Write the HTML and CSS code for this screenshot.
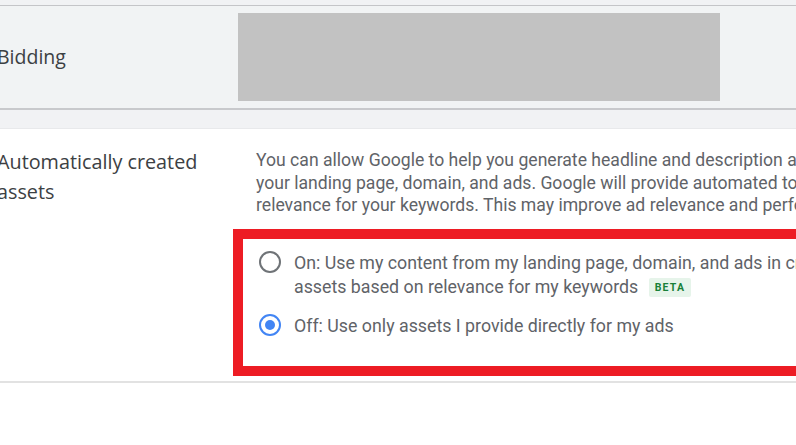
FILE: index.html
```html
<!DOCTYPE html>
<html>
<head>
<meta charset="utf-8">
<link rel="stylesheet" href="styles.css">
</head>
<body>
<div class="page">
  <div class="strip-top"></div>
  <section class="bidding">
    <div class="bid-label">Bidding</div>
    <div class="placeholder"></div>
  </section>
  <div class="strip-mid"></div>
  <section class="assets">
    <div class="assets-label">Automatically created<br>assets</div>
    <div class="assets-body">
      <p class="desc">You can allow Google to help you generate headline and description assets from<br>your landing page, domain, and ads. Google will provide automated tools based on<br>relevance for your keywords. This may improve ad relevance and performance.</p>
      <div class="highlight">
        <label class="option">
          <span class="radio"></span>
          <span class="opt-text">On: Use my content from my landing page, domain, and ads in creating<br>assets based on relevance for my keywords <span class="beta">BETA</span></span>
        </label>
        <label class="option">
          <span class="radio checked"></span>
          <span class="opt-text">Off: Use only assets I provide directly for my ads</span>
        </label>
      </div>
    </div>
  </section>
</div>
</body>
</html>
```
FILE: styles.css
```css
html, body {
  margin: 0;
  padding: 0;
  background: #ffffff;
  overflow: hidden;
  width: 796px;
  height: 445px;
}
.page {
  width: 1200px;
  margin-left: -3px;
  font-family: Roboto, "Liberation Sans", sans-serif;
}
.strip-top {
  height: 5px;
  background: #f1f2f4;
}
.bidding {
  display: flex;
  align-items: flex-start;
  height: 102px;
  background: #f1f3f4;
  border-top: 1px solid #c4c5c8;
  border-bottom: 2px solid #c8c9cc;
  box-sizing: content-box;
}
.bid-label {
  width: 241px;
  padding-top: 37px;
  font-family: "Open Sans", sans-serif;
  font-size: 19.5px;
  color: #3c4043;
}
.placeholder {
  margin-top: 7px;
  width: 482px;
  height: 88px;
  background: #c2c2c2;
}
.strip-mid {
  height: 18px;
  background: #f1f2f4;
  border-bottom: 1px solid #e8e9eb;
}
.assets {
  display: flex;
  align-items: flex-start;
  border-bottom: 2px solid #e2e2e2;
  padding-bottom: 5px;
}
.assets-label {
  width: 259px;
  padding-top: 18px;
  font-family: "Open Sans", sans-serif;
  font-size: 19.8px;
  line-height: 30px;
  color: #3c4043;
}
.assets-body {
  flex: 1;
}
.desc {
  margin: 20px 0 0 0;
  font-size: 17.6px;
  line-height: 22.5px;
  color: #5f6368;
  white-space: nowrap;
}
.highlight {
  margin: 12px 0 0 -23px;
  border: 10px solid #ed1c24;
  padding: 12px 0 28px 16px;
  width: 800px;
}
.option {
  display: flex;
  align-items: flex-start;
  gap: 13px;
  font-size: 17.8px;
  line-height: 24px;
  color: #5f6368;
  white-space: nowrap;
}
.option + .option {
  margin-top: 15px;
}
.radio {
  flex: none;
  width: 22px;
  height: 22px;
  margin-top: 0;
  box-sizing: border-box;
  border: 2px solid #6f7377;
  border-radius: 50%;
  display: flex;
  align-items: center;
  justify-content: center;
}
.radio.checked {
  border-color: #4285f4;
}
.radio.checked::after {
  content: "";
  width: 10px;
  height: 10px;
  border-radius: 50%;
  background: #4285f4;
}
.beta {
  display: inline-block;
  margin-left: 6px;
  padding: 0 6px;
  height: 19px;
  line-height: 19px;
  vertical-align: middle;
  background: #e6f4ea;
  border-radius: 2px;
  color: #188038;
  font-size: 10.5px;
  font-weight: 700;
  letter-spacing: 1.2px;
}
```
